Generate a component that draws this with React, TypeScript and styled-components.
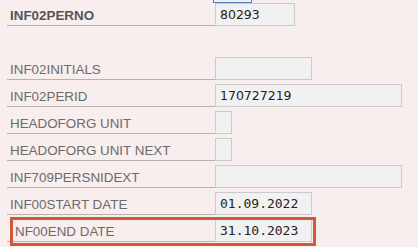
import styled, { createGlobalStyle } from "styled-components";

const GlobalStyle = createGlobalStyle`
  body {
    margin: 0;
    background: #f8eeed;
    font-family: "Liberation Sans", Arial, sans-serif;
  }
`;

const Form = styled.div`
  display: flex;
  flex-direction: column;
  gap: 4px;
  padding: 0 0 0 7px;
  width: 411px;
  height: 247px;
  overflow: hidden;
`;

const PrevField = styled.div`
  margin-left: 206px;
  width: 39px;
  height: 3px;
  box-sizing: border-box;
  border: 1px solid #4a7fc0;
  border-top: none;
  margin-bottom: -4px;
`;

const Row = styled.div`
  position: relative;
  display: grid;
  grid-template-columns: 208px auto;
  height: 23px;
`;

const Spacer = styled.div`
  height: 23px;
`;

const Label = styled.div<{ $bold?: boolean; $indent?: number }>`
  box-sizing: border-box;
  height: 23px;
  padding: 5px 0 0 ${(p) => 3 + (p.$indent ?? 0)}px;
  border-bottom: 1px solid #b9b1b0;
  font-size: 13.4px;
  font-weight: ${(p) => (p.$bold ? 700 : 400)};
  color: ${(p) => (p.$bold ? "#555" : "#6b6b6b")};
  white-space: nowrap;
`;

const Input = styled.div<{ $w: number; $mono?: boolean }>`
  box-sizing: border-box;
  width: ${(p) => p.$w}px;
  height: 23px;
  padding: 3px 0 0 4px;
  background: #f2f1f1;
  border: 1px solid #cccaca;
  color: #222;
  font-family: ${(p) =>
    p.$mono ? `"DejaVu Sans Mono", monospace` : `"DejaVu Sans", sans-serif`};
  font-size: ${(p) => (p.$mono ? "13px" : "12.5px")};
  white-space: nowrap;
`;

const Mark = styled.div`
  position: absolute;
  left: 3px;
  top: -2px;
  width: 306px;
  height: 29px;
  box-sizing: border-box;
  border: 3px solid #d05a37;
  pointer-events: none;
`;

type Field = {
  label: string;
  value?: string;
  w: number;
  mono?: boolean;
  marked?: boolean;
};

const fields: Field[] = [
  { label: "INF02INITIALS", w: 97 },
  { label: "INF02PERID", value: "170727219", w: 187 },
  { label: "HEADOFORG UNIT", w: 17 },
  { label: "HEADOFORG UNIT NEXT", w: 17 },
  { label: "INF709PERSNIDEXT", w: 187 },
  { label: "INF00START DATE", value: "01.09.2022", w: 97, mono: true },
  { label: "NF00END DATE", value: "31.10.2023", w: 97, mono: true, marked: true },
];

export default function App() {
  return (
    <>
      <GlobalStyle />
      <Form>
        <PrevField />
        <Row>
          <Label $bold>INF02PERNO</Label>
          <Input $w={80}>80293</Input>
        </Row>
        <Spacer />
        {fields.map((f) => (
          <Row key={f.label}>
            <Label $indent={f.marked ? 5 : 0}>{f.label}</Label>
            <Input $w={f.w} $mono={f.mono}>
              {f.value}
            </Input>
            {f.marked && <Mark />}
          </Row>
        ))}
      </Form>
    </>
  );
}
